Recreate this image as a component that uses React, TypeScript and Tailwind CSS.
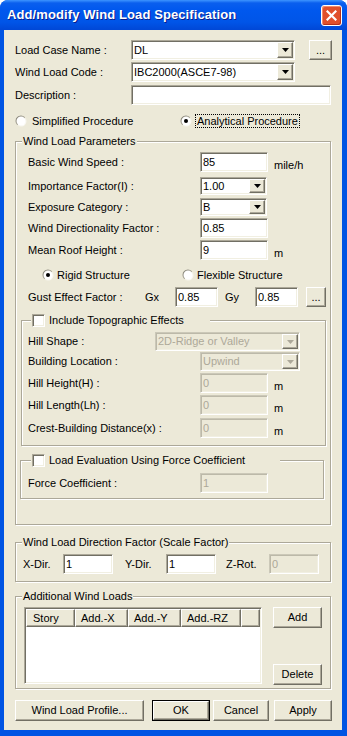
import { useId } from "react";
import type { ReactNode } from "react";

const sunken =
  "border border-t-[#aca899] border-l-[#aca899] border-b-white border-r-white shadow-[inset_1px_1px_0_#716f64,inset_-1px_-1px_0_#f1efe2]";
const sunkenOff =
  "border border-t-[#cbc8b8] border-l-[#cbc8b8] border-b-white border-r-white shadow-[inset_1px_1px_0_#bcb9a9,inset_-1px_-1px_0_#f1efe2]";
const raised =
  "border border-t-white border-l-white border-b-[#716f64] border-r-[#716f64] shadow-[inset_-1px_-1px_0_#aca899] bg-[#ece9d8]";
const etched =
  "border border-[#aca899] shadow-[inset_1px_1px_0_#fff,1px_1px_0_#fff]";

function TextBox({ w, value, disabled }: { w: string; value?: string; disabled?: boolean }) {
  return (
    <div
      className={`flex h-[20px] shrink-0 items-center pl-[2px] ${w} ${
        disabled ? `${sunkenOff} bg-[#ece9d8] text-[#aca899]` : `${sunken} bg-white`
      }`}
    >
      {value}
    </div>
  );
}

function Arrow({ disabled }: { disabled?: boolean }) {
  return (
    <div className={`flex h-full w-[16px] shrink-0 items-center justify-center ${raised}`}>
      <svg width="7" height="4" viewBox="0 0 7 4">
        <polygon points="0,0 7,0 3.5,4" fill={disabled ? "#aca899" : "#000"} />
      </svg>
    </div>
  );
}

function Combo({ w, h, value, disabled }: { w: string; h: string; value: string; disabled?: boolean }) {
  return (
    <div
      className={`flex shrink-0 p-[1px] ${w} ${h} ${
        disabled ? `${sunkenOff} bg-[#ece9d8] text-[#aca899]` : `${sunken} bg-white`
      }`}
    >
      <div className="flex flex-1 items-center pl-[1px]">{value}</div>
      <Arrow disabled={disabled} />
    </div>
  );
}

function Button({ w, h, children, isDefault }: { w: string; h: string; children: ReactNode; isDefault?: boolean }) {
  const btn = (
    <div className={`flex shrink-0 items-center justify-center ${raised} ${isDefault ? "h-full w-full" : `${w} ${h}`}`}>
      {children}
    </div>
  );
  if (!isDefault) return btn;
  return <div className={`shrink-0 border border-black ${w} ${h}`}>{btn}</div>;
}

function Radio({ checked }: { checked?: boolean }) {
  const id = useId();
  return (
    <svg width="12" height="12" viewBox="0 0 12 12" className="shrink-0">
      <defs>
        <linearGradient id={id} x1="0" y1="0" x2="1" y2="1">
          <stop offset="0" stopColor="#716f64" />
          <stop offset="0.5" stopColor="#aca899" />
          <stop offset="0.55" stopColor="#f1efe2" />
          <stop offset="1" stopColor="#ffffff" />
        </linearGradient>
      </defs>
      <circle cx="6" cy="6" r="5.5" fill={`url(#${id})`} />
      <circle cx="6" cy="6" r="4.5" fill="#fff" />
      {checked && <circle cx="6" cy="6" r="2" fill="#000" />}
    </svg>
  );
}

function Check() {
  return <div className={`h-[13px] w-[13px] shrink-0 bg-white ${sunken}`} />;
}

function Group({ box, title, children }: { box: string; title: ReactNode; children: ReactNode }) {
  return (
    <div className={`flex shrink-0 flex-col ${etched} ${box}`}>
      {title}
      {children}
    </div>
  );
}

function Legend({ children, ml }: { children: ReactNode; ml: string }) {
  return (
    <div className={`-mt-[7px] flex h-[13px] w-fit items-center bg-[#ece9d8] px-[1px] leading-[13px] ${ml}`}>
      {children}
    </div>
  );
}

function Row({ label, lw, children, className }: { label: string; lw: string; children: ReactNode; className: string }) {
  return (
    <div className={`flex items-center ${className}`}>
      <span className={`shrink-0 ${lw}`}>{label}</span>
      {children}
    </div>
  );
}

function Unit({ children }: { children: string }) {
  return <span className="ml-[6px] self-end leading-[13px]">{children}</span>;
}

export default function App() {
  return (
    <div className="h-[736px] w-[347px] bg-white font-['Liberation_Sans',Arial,sans-serif] text-[11px] text-black">
      <div className="flex h-full flex-col rounded-t-[8px] bg-[#0054e3]">
        {/* title bar */}
        <div className="flex h-[30px] shrink-0 items-center rounded-t-[8px] bg-[linear-gradient(to_bottom,#3d95ff_0px,#0a5fee_3px,#0058ee_10px,#0055e8_22px,#0047d6_30px)] pl-[7px] pr-[5px]">
          <span className="flex-1 text-[13px] font-bold tracking-[0.1px] text-white [text-shadow:1px_1px_0_#0a1e8c]">
            Add/modify Wind Load Specification
          </span>
          <div className="flex h-[21px] w-[21px] items-center justify-center rounded-[3px] border border-white bg-[#e0502c] shadow-[inset_-1px_-1px_0_#b4301a,inset_1px_1px_0_#f28b6c]">
            <svg width="11" height="11" viewBox="0 0 11 11">
              <path d="M1.5 1.5 L9.5 9.5 M9.5 1.5 L1.5 9.5" stroke="#fff" strokeWidth="2.2" strokeLinecap="square" />
            </svg>
          </div>
        </div>

        {/* body */}
        <div className="mb-[6px] ml-[4px] mr-[5px] flex flex-1 flex-col bg-[#ece9d8] px-[11px]">
          <Row label="Load Case Name :" lw="w-[116px]" className="mt-[10px] h-[20px]">
            <Combo w="w-[164px]" h="h-[20px]" value="DL" />
            <div className="ml-[14px]">
              <Button w="w-[23px]" h="h-[20px]">...</Button>
            </div>
          </Row>
          <Row label="Wind Load Code  :" lw="w-[116px]" className="mt-[2px] h-[20px]">
            <Combo w="w-[164px]" h="h-[20px]" value="IBC2000(ASCE7-98)" />
          </Row>
          <Row label="Description :" lw="w-[116px]" className="mt-[3px] h-[20px]">
            <TextBox w="w-[200px]" />
          </Row>

          <div className="mt-[9px] flex h-[14px] items-center">
            <div className="flex w-[165px] items-center gap-[5px]">
              <Radio />
              <span>Simplified Procedure</span>
            </div>
            <div className="flex items-center gap-[3px]">
              <Radio checked />
              <span className="border border-dotted border-black px-[1px] leading-[12px]">Analytical Procedure</span>
            </div>
          </div>

          {/* Wind Load Parameters */}
          <Group box="mt-[13px] h-[384px]" title={<Legend ml="ml-[6px]">Wind Load Parameters</Legend>}>
            <div className="flex flex-col pl-[12px]">
              <Row label="Basic Wind Speed :" lw="w-[172px]" className="mt-[4px] h-[20px]">
                <TextBox w="w-[68px]" value="85" />
                <Unit>mile/h</Unit>
              </Row>
              <Row label="Importance Factor(I) :" lw="w-[172px]" className="mt-[5px] h-[18px]">
                <Combo w="w-[67px]" h="h-[18px]" value="1.00" />
              </Row>
              <Row label="Exposure Category :" lw="w-[172px]" className="mt-[3px] h-[18px]">
                <Combo w="w-[67px]" h="h-[18px]" value="B" />
              </Row>
              <Row label="Wind Directionality Factor :" lw="w-[172px]" className="mt-[2px] h-[20px]">
                <TextBox w="w-[68px]" value="0.85" />
              </Row>
              <Row label="Mean Roof Height :" lw="w-[172px]" className="mt-[2px] h-[20px]">
                <TextBox w="w-[68px]" value="9" />
                <Unit>m</Unit>
              </Row>
              <div className="mt-[8px] flex h-[14px] items-center pl-[14px]">
                <div className="flex w-[140px] items-center gap-[3px]">
                  <Radio checked />
                  <span>Rigid Structure</span>
                </div>
                <div className="flex items-center gap-[3px]">
                  <Radio />
                  <span>Flexible Structure</span>
                </div>
              </div>
              <Row label="Gust Effect Factor :" lw="w-[117px]" className="mt-[5px] h-[20px]">
                <span className="w-[30px] shrink-0">Gx</span>
                <TextBox w="w-[43px]" value="0.85" />
                <span className="ml-[7px] w-[30px] shrink-0">Gy</span>
                <TextBox w="w-[43px]" value="0.85" />
                <div className="ml-[8px]">
                  <Button w="w-[20px]" h="h-[20px]">...</Button>
                </div>
              </Row>
            </div>

            {/* Topographic */}
            <Group
              box="ml-[5px] mt-[13px] w-[305px] h-[126px]"
              title={
                <div className="-mt-[7px] ml-[9px] flex h-[13px] w-[179px] items-center gap-[4px] bg-[#ece9d8] pl-[1px]">
                  <Check />
                  <span>Include Topographic Effects</span>
                </div>
              }
            >
              <div className="flex flex-col pl-[6px]">
                <Row label="Hill Shape :" lw="w-[127px]" className="mt-[5px] h-[19px]">
                  <Combo w="w-[145px]" h="h-[19px]" value="2D-Ridge or Valley" disabled />
                </Row>
                <Row label="Building Location :" lw="w-[172px]" className="mt-[1px] h-[19px]">
                  <Combo w="w-[100px]" h="h-[19px]" value="Upwind" disabled />
                </Row>
                <Row label="Hill Height(H) :" lw="w-[172px]" className="mt-[2px] h-[20px]">
                  <TextBox w="w-[68px]" value="0" disabled />
                  <Unit>m</Unit>
                </Row>
                <Row label="Hill Length(Lh) :" lw="w-[172px]" className="mt-[2px] h-[20px]">
                  <TextBox w="w-[68px]" value="0" disabled />
                  <Unit>m</Unit>
                </Row>
                <Row label="Crest-Building Distance(x) :" lw="w-[172px]" className="mt-[3px] h-[20px]">
                  <TextBox w="w-[68px]" value="0" disabled />
                  <Unit>m</Unit>
                </Row>
              </div>
            </Group>

            {/* Force coefficient */}
            <Group
              box="ml-[4px] mt-[14px] w-[304px] h-[39px]"
              title={
                <div className="-mt-[7px] ml-[10px] flex h-[13px] w-[249px] items-center gap-[4px] bg-[#ece9d8] pl-[1px]">
                  <Check />
                  <span>Load Evaluation Using Force Coefficient</span>
                </div>
              }
            >
              <Row label="Force Coefficient :" lw="w-[172px]" className="mt-[6px] h-[20px] pl-[7px]">
                <TextBox w="w-[68px]" value="1" disabled />
              </Row>
            </Group>
          </Group>

          {/* Direction factor */}
          <Group box="mt-[17px] h-[40px]" title={<Legend ml="ml-[6px]">Wind Load Direction Factor (Scale Factor)</Legend>}>
            <div className="mt-[5px] flex h-[20px] items-center pl-[7px]">
              <span className="w-[40px] shrink-0">X-Dir.</span>
              <TextBox w="w-[50px]" value="1" />
              <span className="ml-[12px] w-[41px] shrink-0">Y-Dir.</span>
              <TextBox w="w-[50px]" value="1" />
              <span className="ml-[10px] w-[43px] shrink-0">Z-Rot.</span>
              <TextBox w="w-[50px]" value="0" disabled />
            </div>
          </Group>

          {/* Additional loads */}
          <Group box="mt-[14px] h-[93px]" title={<Legend ml="ml-[6px]">Additional Wind Loads</Legend>}>
            <div className="mt-[4px] flex pl-[8px]">
              <div className={`flex h-[77px] w-[238px] flex-col bg-white p-[1px] ${sunken}`}>
                <div className="flex h-[18px] shrink-0">
                  <div className={`flex w-[49px] items-center pl-[6px] ${raised}`}>Story</div>
                  <div className={`flex w-[53px] items-center pl-[5px] ${raised}`}>Add.-X</div>
                  <div className={`flex w-[53px] items-center pl-[5px] ${raised}`}>Add.-Y</div>
                  <div className={`flex w-[60px] items-center pl-[5px] ${raised}`}>Add.-RZ</div>
                  <div className={`w-[19px] ${raised}`} />
                </div>
              </div>
              <div className="ml-[11px] flex h-[78px] flex-col justify-between">
                <Button w="w-[49px]" h="h-[21px]">Add</Button>
                <Button w="w-[49px]" h="h-[21px]">Delete</Button>
              </div>
            </div>
          </Group>

          {/* bottom buttons */}
          <div className="mt-[11px] flex h-[21px] items-center">
            <Button w="w-[129px]" h="h-[21px]">Wind Load Profile...</Button>
            <div className="ml-[8px]">
              <Button w="w-[58px]" h="h-[21px]" isDefault>
                OK
              </Button>
            </div>
            <div className="ml-[3px]">
              <Button w="w-[56px]" h="h-[21px]">Cancel</Button>
            </div>
            <div className="ml-[5px]">
              <Button w="w-[58px]" h="h-[21px]">Apply</Button>
            </div>
          </div>
        </div>
      </div>
    </div>
  );
}
